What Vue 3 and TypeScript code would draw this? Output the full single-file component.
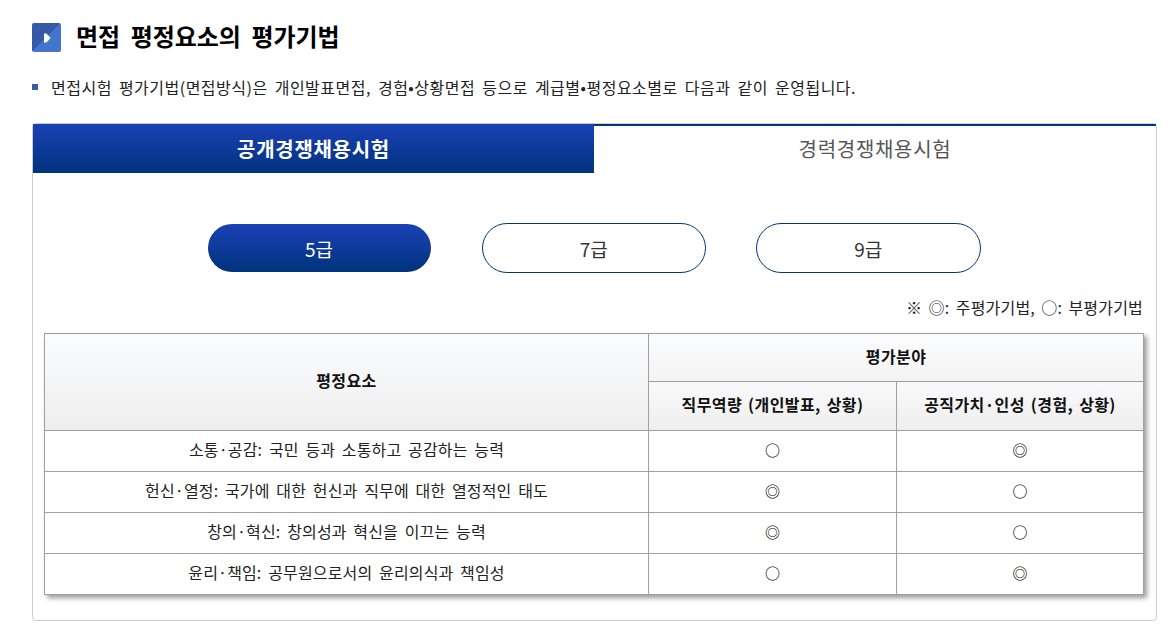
<script setup lang="ts">
interface Row { label: string; a: string; b: string }
const rows: Row[] = [
  { label: '소통·공감: 국민 등과 소통하고 공감하는 능력', a: '○', b: '◎' },
  { label: '헌신·열정: 국가에 대한 헌신과 직무에 대한 열정적인 태도', a: '◎', b: '○' },
  { label: '창의·혁신: 창의성과 혁신을 이끄는 능력', a: '◎', b: '○' },
  { label: '윤리·책임: 공무원으로서의 윤리의식과 책임성', a: '○', b: '◎' },
]
const grades = [
  { name: '5급', active: true },
  { name: '7급', active: false },
  { name: '9급', active: false },
]
</script>

<template>
  <div class="page">
    <header class="title">
      <span class="title-icon">
        <svg width="7" height="10" viewBox="0 0 7 10"><path d="M0 0.500 L2.500 0.500 L6.500 5 L2.500 9.500 L0 9.500 Z" fill="#fff" /></svg>
      </span>
      <h1>면접 평정요소의 평가기법</h1>
    </header>
    <p class="lead"><span class="bullet"></span>면접시험 평가기법(면접방식)은 개인발표면접, 경험•상황면접 등으로 계급별•평정요소별로 다음과 같이 운영됩니다.</p>
    <section class="card">
      <div class="tabs">
        <div class="tab active">공개경쟁채용시험</div>
        <div class="tab">경력경쟁채용시험</div>
      </div>
      <div class="pills">
        <div v-for="g in grades" :key="g.name" class="pill" :class="{ on: g.active }">{{ g.name }}</div>
      </div>
      <p class="note">※ ◎: 주평가기법, ○: 부평가기법</p>
      <table class="grid">
        <colgroup>
          <col class="c1" />
          <col class="c2" />
          <col class="c3" />
        </colgroup>
        <thead>
          <tr class="h1">
            <th rowspan="2" class="span">평정요소</th>
            <th colspan="2" class="top">평가분야</th>
          </tr>
          <tr class="h2">
            <th class="bot">직무역량 (개인발표, 상황)</th>
            <th class="bot">공직가치·인성 (경험, 상황)</th>
          </tr>
        </thead>
        <tbody>
          <tr v-for="r in rows" :key="r.label">
            <td>{{ r.label }}</td>
            <td><span class="sym">{{ r.a }}</span></td>
            <td><span class="sym">{{ r.b }}</span></td>
          </tr>
        </tbody>
      </table>
    </section>
  </div>
</template>

<style scoped>
.page {
  box-sizing: border-box;
  width: 1174px;
  height: 633px;
  padding: 23px 17px 0 32px;
  font-family: "Noto Sans CJK KR", "Noto Sans", sans-serif;
  color: #111;
  overflow: hidden;
}
.title { display: flex; align-items: center; height: 29px; gap: 15px; }
.title-icon {
  width: 29px; height: 29px; border-radius: 2px;
  background: linear-gradient(135deg, #3659a8 0 50%, #4474cc 50% 100%);
  display: flex; align-items: center; justify-content: center;
  padding-left: 1px; box-sizing: border-box;
}
h1 { margin: 0 0 4px; font-size: 24px; line-height: 29px; font-weight: 700; color: #000; letter-spacing: -0.1px; word-spacing: 5.5px; }
.lead {
  margin: 22px 0 0; height: 26px; line-height: 26px; font-size: 16px; color: #222;
  display: flex; align-items: center; word-spacing: 3px; letter-spacing: 0.49px; white-space: nowrap;
}
.bullet { width: 6px; height: 6px; background: #3c5ba8; margin-right: 13px; flex: none; }
.card {
  box-sizing: border-box; margin-top: 23px; width: 1125px; height: 498px;
  border: 1px solid #ccc; border-radius: 4px;
  background: #fff;
}
.tabs { display: flex; height: 49px; box-sizing: border-box; border-top: 2px solid #00357f; }
.tab {
  flex: 0 0 561px; display: flex; align-items: center; justify-content: center;
  font-size: 20px; color: #555; letter-spacing: 0.7px; padding-bottom: 2px; box-sizing: border-box;
}
.tab + .tab { flex: 1; }
.tab.active { background: linear-gradient(#1b41b5, #00337d); color: #fff; font-weight: 700; margin-top: -2px; height: 49px; padding-bottom: 0; }
.pills { display: flex; justify-content: center; gap: 50px; margin-top: 50px; padding-right: 2px; align-items: center; }
.pill {
  box-sizing: border-box; width: 224.5px; height: 50px; border: 1px solid #00357f; border-radius: 25px;
  display: flex; align-items: center; justify-content: center; font-size: 19px; color: #333;
}
.pill.on {
  width: 223px; height: 48px; border: 0; margin-right: 1px; margin-left: 1px;
  background: linear-gradient(#1b41b5, #00337d); color: #fff;
}
.note { margin: 23px 13px 0 0; text-align: right; font-size: 16px; line-height: 22px; color: #222; word-spacing: 2.500px; letter-spacing: 0.2px; }
.grid {
  margin: 15px 0 0 11px; width: 1099px; border-collapse: collapse; table-layout: fixed;
  box-shadow: 3px 3px 5px rgba(0, 0, 0, 0.4); font-size: 16px; color: #222;
}
.c1 { width: 604px; }
.c2 { width: 248px; }
.c3 { width: 247px; }
th, td { border: 1px solid #a0a0a0; text-align: center; padding: 0 0 4px; box-sizing: border-box; }
th { font-weight: 700; font-size: 16px; color: #111; letter-spacing: 0.4px; word-spacing: 2px; }
td { height: 41px; word-spacing: 3px; letter-spacing: 0.15px; }
.h1 { height: 48px; }
.h2 { height: 49px; }
.span { background: linear-gradient(#fbfcff, #eeeeee); }
.top { background: linear-gradient(#fbfcff, #f3f3f3); }
.bot { background: linear-gradient(#f9f9fb, #eeeeee); }
.sym { font-size: 15px; color: #000; font-weight: 500; }
</style>
